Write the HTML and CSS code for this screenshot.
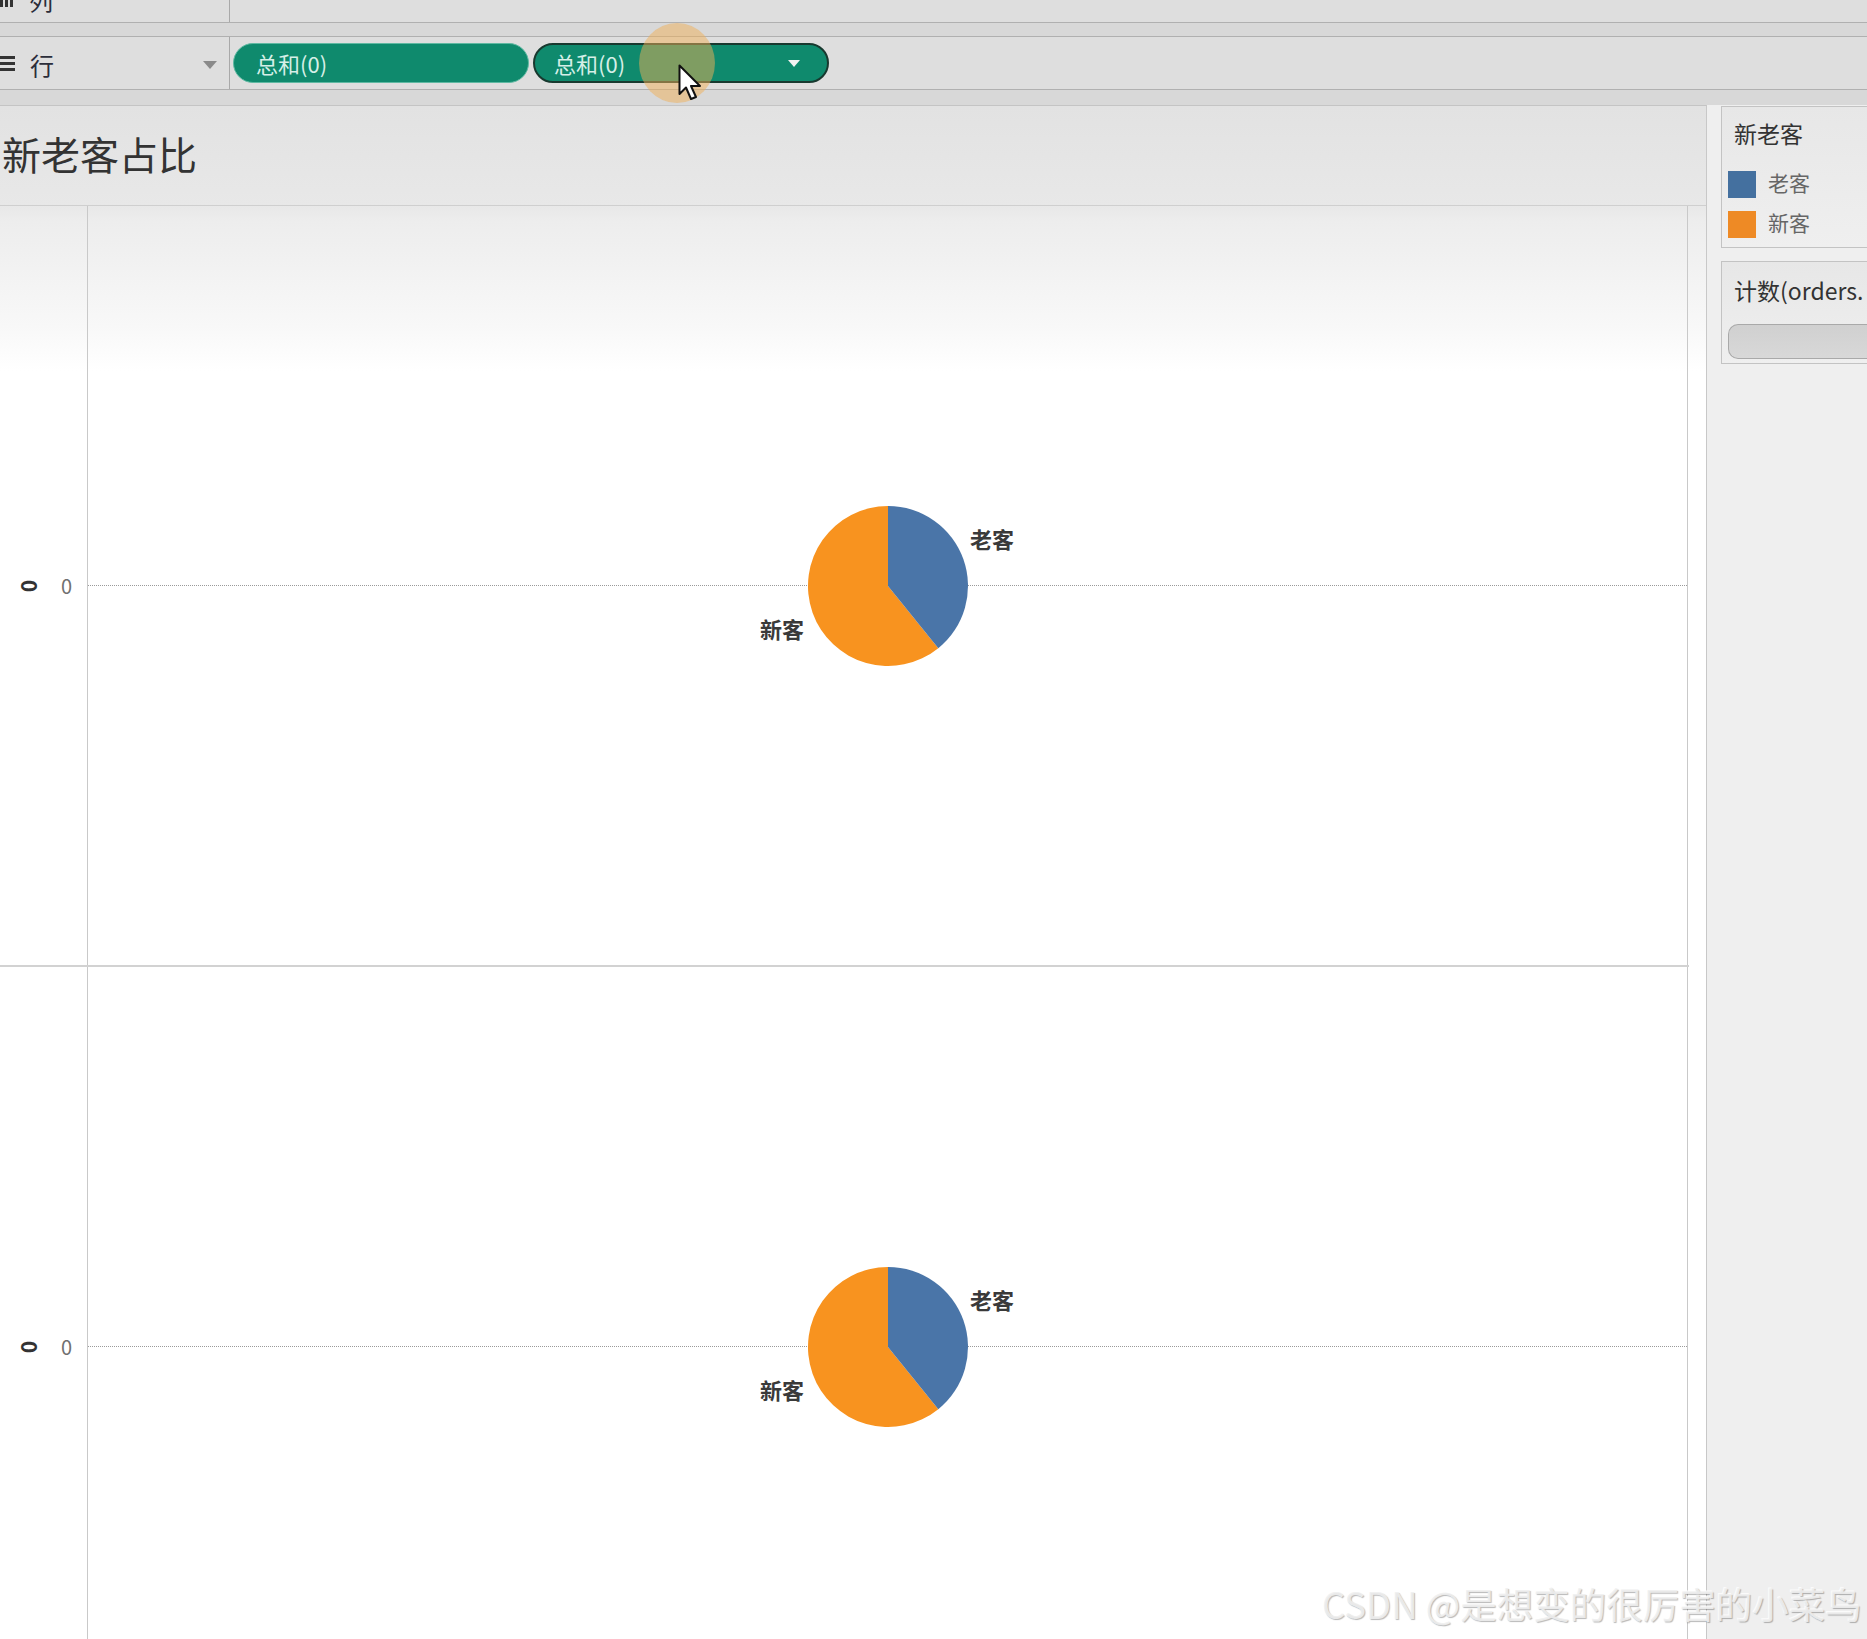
FILE: index.html
```html
<!DOCTYPE html>
<html lang="zh">
<head>
  <meta charset="UTF-8">
  <title>新老客占比</title>
  <link rel="stylesheet" href="styles.css">
</head>
<body>
  <div class="shelves">
    <div class="shelf shelf-cols">
      <div class="shelf-label">
        <svg class="shelf-icon" width="14" height="16" viewBox="0 0 14 16"><rect x="0" y="0" width="3" height="16" fill="#333"/><rect x="5" y="0" width="3" height="16" fill="#333"/><rect x="10" y="0" width="3" height="16" fill="#333"/></svg>
        <span class="shelf-name">列</span>
      </div>
      <div class="shelf-drop"></div>
    </div>
    <div class="shelf shelf-rows">
      <div class="shelf-label">
        <svg class="shelf-icon" width="15" height="16" viewBox="0 0 15 16"><rect x="0" y="1" width="15" height="3" fill="#333"/><rect x="0" y="7" width="15" height="3" fill="#333"/><rect x="0" y="13" width="15" height="3" fill="#333"/></svg>
        <span class="shelf-name">行</span>
        <span class="shelf-arrow"></span>
      </div>
      <div class="shelf-drop">
        <div class="pill">总和(0)</div>
        <div class="pill pill-active">总和(0)<span class="pill-arrow"></span></div>
      </div>
    </div>
  </div>

  <div class="workspace">
    <div class="view">
      <div class="view-title">新老客占比</div>
      <div class="chart">
        <div class="pane-row">
          <div class="axis"><span class="axis-rot">0</span><span class="axis-val">0</span></div>
          <div class="plot">
            <div class="zero-line"></div>
            <svg class="pie" width="300" height="200" viewBox="-150 -100 300 200">
              <path d="M0,0 L50.3,62.2 A80,80 0 1 1 0,-80 Z" fill="#f8931f"/>
              <path d="M0,0 L0,-80 A80,80 0 0 1 50.3,62.2 Z" fill="#4a75a8"/>
              <text x="82" y="-38" class="pie-label">老客</text>
              <text x="-128" y="52" class="pie-label">新客</text>
            </svg>
          </div>
        </div>
        <div class="pane-row">
          <div class="axis"><span class="axis-rot">0</span><span class="axis-val">0</span></div>
          <div class="plot">
            <div class="zero-line"></div>
            <svg class="pie" width="300" height="200" viewBox="-150 -100 300 200">
              <path d="M0,0 L50.3,62.2 A80,80 0 1 1 0,-80 Z" fill="#f8931f"/>
              <path d="M0,0 L0,-80 A80,80 0 0 1 50.3,62.2 Z" fill="#4a75a8"/>
              <text x="82" y="-38" class="pie-label">老客</text>
              <text x="-128" y="52" class="pie-label">新客</text>
            </svg>
          </div>
        </div>
      </div>
    </div>

    <div class="side">
      <div class="card">
        <div class="card-title">新老客</div>
        <div class="legend-item"><span class="swatch swatch-blue"></span><span class="legend-text">老客</span></div>
        <div class="legend-item"><span class="swatch swatch-orange"></span><span class="legend-text">新客</span></div>
      </div>
      <div class="card card-size">
        <div class="card-title">计数(orders.</div>
        <div class="slider"></div>
      </div>
    </div>
  </div>

  <div class="cursor-glow"></div>
  <svg class="cursor" width="24" height="38" viewBox="0 0 24 38">
    <path d="M1.5,1.5 L1.5,30 L8,23.5 L13,35 L18,33 L13,22 L22,22 Z" fill="#fff" stroke="#111" stroke-width="2" stroke-linejoin="round"/>
  </svg>

  <div class="watermark">CSDN @是想变的很厉害的小菜鸟</div>
</body>
</html>
```

FILE: styles.css
```css
body {
  margin: 0;
  width: 1867px;
  height: 1639px;
  overflow: hidden;
  position: relative;
  font-family: "Noto Sans CJK SC", "Liberation Sans", sans-serif;
  color: #333;
  background: #efefef;
}
.shelves {
  height: 105px;
  background: #d8d8d8;
}
.shelf {
  display: flex;
  background: #dedede;
  overflow: hidden;
}
.shelf-cols {
  height: 22px;
  border-bottom: 1px solid #b0b0b0;
}
.shelf-rows {
  margin-top: 13px;
  height: 52px;
  border-top: 1px solid #b0b0b0;
  border-bottom: 1px solid #b0b0b0;
}
.shelf-label {
  width: 229px;
  border-right: 1px solid #a9a9a9;
  display: flex;
  align-items: center;
  position: relative;
}
.shelf-cols .shelf-label {
  margin-top: -24px;
  height: 46px;
}
.shelf-icon {
  flex: none;
}
.shelf-name {
  margin-left: 15px;
  font-size: 24px;
  color: #2b2d3a;
}
.shelf-rows .shelf-name {
  margin-top: 2px;
}
.shelf-arrow {
  margin-left: auto;
  margin-right: 12px;
  margin-top: 4px;
  border-left: 7px solid transparent;
  border-right: 7px solid transparent;
  border-top: 8px solid #8a8a8a;
}
.shelf-drop {
  flex: 1;
  display: flex;
  align-items: flex-start;
  gap: 4px;
  padding-left: 3px;
}
.pill {
  margin-top: 6px;
  box-sizing: border-box;
  width: 296px;
  height: 40px;
  border-radius: 20px;
  background: #0f8a6d;
  border: 1px solid #5fb9a2;
  color: #d6efe7;
  font-size: 22px;
  line-height: 37px;
  padding-left: 22px;
  display: flex;
  align-items: center;
}
.pill-active {
  border: 2px solid #18392f;
  padding-left: 19px;
}
.pill-arrow {
  margin-left: auto;
  margin-right: 27px;
  border-left: 6px solid transparent;
  border-right: 6px solid transparent;
  border-top: 7px solid #f2f2f2;
}
.workspace {
  display: flex;
  height: 1534px;
  overflow: hidden;
}
.view {
  width: 1706px;
  flex: none;
  border-top: 1px solid #c4c4c4;
  border-right: 1px solid #c8c8c8;
  background: linear-gradient(to bottom, #e2e2e2 0px, #e8e8e8 100px, #ededed 115px, #f8f8f8 220px, #ffffff 265px);
}
.view-title {
  height: 100px;
  box-sizing: border-box;
  padding-bottom: 6px;
  border-bottom: 1px solid #cfcfcf;
  display: flex;
  align-items: center;
  padding-left: 2px;
  font-size: 39px;
  color: #333;
}
.chart {
  width: 1689px;
}
.pane-row {
  display: flex;
  height: 759px;
}
.pane-row + .pane-row {
  border-top: 2px solid #d2d2d2;
}
.axis {
  width: 88px;
  border-right: 1px solid #c9c9c9;
  display: flex;
  align-items: center;
  padding-left: 18px;
  box-sizing: border-box;
}
.axis-rot {
  display: inline-block;
  transform: rotate(-90deg);
  font-size: 21px;
  font-weight: bold;
  color: #333;
  width: 20px;
  text-align: center;
}
.axis-val {
  margin-left: 23px;
  font-size: 20px;
  color: #707070;
}
.plot {
  width: 1599px;
  border-right: 1px solid #c9c9c9;
  display: grid;
  place-items: center;
}
.zero-line,
.pie {
  grid-area: 1 / 1;
}
.zero-line {
  width: 100%;
  border-top: 1px dotted #9a9a9a;
}
.pie-label {
  font-size: 22px;
  font-weight: bold;
  fill: #3a3a3a;
}
.side {
  flex: 1;
  overflow: hidden;
  padding-left: 14px;
  background: #efefef;
}
.card {
  width: 200px;
  margin-top: 1px;
  height: 140px;
  border: 1px solid #c3c3c3;
  border-right: none;
  background: linear-gradient(to bottom, #e7e7e7, #efefef);
  padding-left: 6px;
}
.card-size {
  margin-top: 13px;
  height: 101px;
}
.card-title {
  font-size: 23px;
  color: #333;
  padding-left: 6px;
  padding-top: 10px;
  line-height: 32px;
  white-space: nowrap;
}
.legend-item {
  display: flex;
  align-items: center;
  height: 40px;
}
.card .card-title + .legend-item {
  margin-top: 15px;
}
.swatch {
  width: 28px;
  height: 27px;
}
.swatch-blue {
  background: #44709f;
}
.swatch-orange {
  background: #ee8a25;
}
.legend-text {
  margin-left: 12px;
  margin-top: -4px;
  font-size: 21px;
  color: #666;
}
.card-size .card-title {
  padding-top: 12px;
}
.slider {
  margin-top: 18px;
  height: 33px;
  border: 1px solid #a9a9a9;
  border-right: none;
  border-radius: 10px 0 0 10px;
  background: linear-gradient(to bottom, #d0d0d0, #d8d8d8);
}
.cursor-glow {
  position: absolute;
  left: 639px;
  top: 23px;
  width: 76px;
  height: 80px;
  border-radius: 50%;
  background: rgba(240, 176, 88, 0.5);
}
.cursor {
  position: absolute;
  left: 678px;
  top: 64px;
}
.watermark {
  position: absolute;
  left: 1322px;
  top: 1577px;
  font-size: 36.5px;
  color: rgba(240, 240, 240, 0.9);
  text-shadow: 1px 1px 1px rgba(0, 0, 0, 0.28), -1px -1px 0 rgba(255, 255, 255, 0.8);
  white-space: nowrap;
}
```
